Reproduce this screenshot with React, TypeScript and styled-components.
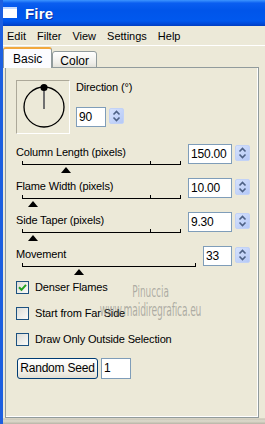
import React from "react";
import styled, { createGlobalStyle } from "styled-components";

const GlobalStyle = createGlobalStyle`
	html, body {
		margin: 0;
		padding: 0;
		background: #ece9d8;
	}
	body {
		font-family: "Liberation Sans", Arial, sans-serif;
		font-size: 11px;
		color: #000;
	}
`;

const Window = styled.div`
	width: 265px;
	height: 424px;
	box-sizing: border-box;
	display: flex;
	flex-direction: column;
	background: #ece9d8;
	border-left: 3px solid #1d5fe0;
	position: relative;
	overflow: hidden;
`;

const TitleBar = styled.div`
	height: 26px;
	margin-left: -3px;
	display: flex;
	align-items: center;
	gap: 8px;
	padding-left: 3px;
	background: linear-gradient(#3d95ff 0%, #0a5ef0 12%, #0055ea 40%, #0058ee 80%, #0049d8 92%, #003dc0 100%);
	flex-shrink: 0;
`;

const TitleIcon = styled.div`
	width: 14px;
	height: 11px;
	background: #fff;
	border-top: 2px solid #c7dcff;
	box-sizing: border-box;
	margin-top: -1px;
`;

const TitleText = styled.span`
	color: #fff;
	font-weight: bold;
	font-size: 15px;
	letter-spacing: 0.2px;
	text-shadow: 1px 1px 0 #0a2ea0;
`;

const MenuBar = styled.div`
	height: 19px;
	border-bottom: 1px solid #fff;
	display: flex;
	align-items: center;
	gap: 11px;
	padding-left: 4px;
	flex-shrink: 0;
`;

const MenuItem = styled.span`
	font-size: 11px;
`;

const TabRow = styled.div`
	display: flex;
	align-items: flex-end;
	margin-top: 1px;
	height: 21px;
	margin-bottom: -1px;
	position: relative;
	z-index: 1;
	flex-shrink: 0;
`;

const Tab = styled.div<{ $active?: boolean }>`
	box-sizing: border-box;
	height: ${(p) => (p.$active ? 21 : 17)}px;
	padding: ${(p) => (p.$active ? "3px 9px 0 9px" : "2px 7px 0 7px")};
	border: 1px solid #919b9c;
	border-bottom: ${(p) => (p.$active ? "none" : "1px solid #919b9c")};
	border-top: ${(p) => (p.$active ? "2px solid #f2a83c" : "1px solid #919b9c")};
	border-radius: 3px 3px 0 0;
	background: ${(p) => (p.$active ? "#fcfcfe" : "linear-gradient(#fff, #f0efea 70%, #e3e2da)")};
	font-size: 12px;
	line-height: 14px;
`;

const Panel = styled.div`
	box-sizing: border-box;
	margin-left: 2px;
	width: 254px;
	height: 351px;
	border: 1px solid #919b9c;
	box-shadow: inset -1px -1px 0 #fff;
	background: #ece9d8;
	padding: 12px 8px 0 10px;
	display: flex;
	flex-direction: column;
	position: relative;
	flex-shrink: 0;
`;

const BottomStrip = styled.div`
	flex: 1;
	border-top: 1px solid #d6d2c2;
	background: linear-gradient(#c9c6b8, #dedbcd 40%, #b8b4a6);
`;

const DirectionRow = styled.div`
	display: flex;
	gap: 6px;
	height: 54px;
	margin-bottom: 10px;
`;

const DialBox = styled.div`
	box-sizing: border-box;
	width: 54px;
	height: 54px;
	border: 1px solid;
	border-color: #aca899 #fff #fff #aca899;
	display: flex;
	align-items: center;
	justify-content: center;
`;

const DirCol = styled.div`
	display: flex;
	flex-direction: column;
`;

const Label = styled.div<{ $top?: number }>`
	font-size: 11px;
	line-height: 13px;
	letter-spacing: -0.15px;
	white-space: nowrap;
	margin-top: ${(p) => p.$top ?? 0}px;
`;

const FieldRow = styled.div<{ $top?: number }>`
	display: flex;
	align-items: flex-start;
	margin-top: ${(p) => p.$top ?? 0}px;
`;

const NumInput = styled.div<{ $w: number; $h?: number }>`
	box-sizing: border-box;
	width: ${(p) => p.$w}px;
	height: ${(p) => p.$h ?? 20}px;
	border: 1px solid #7f9db9;
	background: #fff;
	font-size: 12px;
	line-height: ${(p) => (p.$h ?? 20) - 2}px;
	padding-left: 2px;
	letter-spacing: -0.2px;
`;

const Spin = styled.div`
	box-sizing: border-box;
	width: 15px;
	height: 16px;
	margin-left: 3px;
	margin-top: 1px;
	border-radius: 2px;
	border: 1px solid #c2d2f6;
	background: linear-gradient(135deg, #d6e2fc, #b4c8f6);
	display: flex;
	align-items: center;
	justify-content: center;
`;

const Group = styled.div`
	display: flex;
	align-items: flex-start;
	height: 34px;
`;

const GroupLeft = styled.div`
	flex: 1;
	display: flex;
	flex-direction: column;
	padding-top: 2px;
`;

const GroupRight = styled.div`
	display: flex;
`;

const Track = styled.div`
	position: relative;
	height: 1px;
	background: #000;
	margin: 5px 7px 0 6px;
`;

const Tick = styled.div`
	position: absolute;
	bottom: 0;
	width: 1px;
	height: 4px;
	background: #000;
`;

const Thumb = styled.div`
	position: absolute;
	top: 3px;
	width: 0;
	height: 0;
	margin-left: -5px;
	border-left: 5px solid transparent;
	border-right: 5px solid transparent;
	border-bottom: 6px solid #000;
`;

const CheckList = styled.div`
	display: flex;
	flex-direction: column;
	gap: 13px;
	margin-top: 1px;
`;

const CheckRow = styled.div`
	display: flex;
	align-items: center;
	gap: 6px;
	height: 13px;
`;

const Box = styled.div`
	box-sizing: border-box;
	width: 13px;
	height: 13px;
	border: 1px solid #1c5180;
	background: linear-gradient(135deg, #dcdcd7, #fbfbf9);
	display: flex;
	align-items: center;
	justify-content: center;
`;

const ButtonRow = styled.div`
	display: flex;
	gap: 3px;
	margin-top: 12px;
	margin-left: 1px;
`;

const Button = styled.div`
	box-sizing: border-box;
	width: 81px;
	height: 21px;
	border: 1px solid #003c74;
	border-radius: 3px;
	background: linear-gradient(#ffffff, #f3f2ec 60%, #e2ded2);
	font-size: 12px;
	line-height: 19px;
	text-align: center;
	letter-spacing: -0.2px;
`;

const Watermark = styled.div`
	position: absolute;
	left: 72px;
	top: 214px;
	width: 146px;
	display: flex;
	flex-direction: column;
	align-items: center;
	color: rgba(110, 110, 110, 0.5);
	font-family: "DejaVu Sans Condensed", "DejaVu Sans", sans-serif;
	pointer-events: none;
	line-height: 19px;
`;

const WmName = styled.span`
	font-size: 16px;
	transform: scaleX(0.62);
`;

const WmSite = styled.span`
	font-size: 17px;
	letter-spacing: -0.3px;
	transform: scaleX(0.6);
	white-space: nowrap;
`;

function SpinButton() {
	return (
		<Spin>
			<svg width="9" height="12" viewBox="0 0 9 12">
				<path d="M1.5 4.5 L4.5 1.5 L7.5 4.5" fill="none" stroke="#4d6185" strokeWidth="1.6" />
				<path d="M1.5 7.5 L4.5 10.5 L7.5 7.5" fill="none" stroke="#4d6185" strokeWidth="1.6" />
			</svg>
		</Spin>
	);
}

function Slider({ pos, ticks }: { pos: number; ticks: number[] }) {
	return (
		<Track>
			{ticks.map((t) => (
				<Tick key={t} style={{ left: `calc(${t}% - ${t === 100 ? 1 : 0}px)` }} />
			))}
			<Thumb style={{ left: `${pos}%` }} />
		</Track>
	);
}

const params = [
	{ label: "Column Length (pixels)", value: "150.00", w: 44, pos: 27.5, ticks: [0, 80.6, 100] },
	{ label: "Flame Width (pixels)", value: "10.00", w: 44, pos: 7, ticks: [0, 80.6, 100] },
	{ label: "Side Taper (pixels)", value: "9.30", w: 44, pos: 7, ticks: [0, 80.6, 100] },
	{ label: "Movement", value: "33", w: 29, pos: 33, ticks: [0, 100] },
];

const checks = [
	{ label: "Denser Flames", on: true },
	{ label: "Start from Far Side", on: false },
	{ label: "Draw Only Outside Selection", on: false },
];

export default function App() {
	return (
		<>
			<GlobalStyle />
			<Window>
				<TitleBar>
					<TitleIcon />
					<TitleText>Fire</TitleText>
				</TitleBar>
				<MenuBar>
					{["Edit", "Filter", "View", "Settings", "Help"].map((m) => (
						<MenuItem key={m}>{m}</MenuItem>
					))}
				</MenuBar>
				<TabRow>
					<Tab $active>Basic</Tab>
					<Tab>Color</Tab>
				</TabRow>
				<Panel>
					<DirectionRow>
						<DialBox>
							<svg width="52" height="52" viewBox="0 0 52 52">
								<circle cx="27" cy="26" r="20" fill="none" stroke="#000" strokeWidth="1.3" />
								<line x1="27" y1="7" x2="27" y2="28" stroke="#707070" strokeWidth="2" />
								<circle cx="27" cy="6.5" r="3.6" fill="#000" />
							</svg>
						</DialBox>
						<DirCol>
							<Label $top={1}>Direction (°)</Label>
							<FieldRow $top={13}>
								<NumInput $w={30}>90</NumInput>
								<SpinButton />
							</FieldRow>
						</DirCol>
					</DirectionRow>
					{params.map((p) => (
						<Group key={p.label}>
							<GroupLeft>
								<Label>{p.label}</Label>
								<Slider pos={p.pos} ticks={p.ticks} />
							</GroupLeft>
							<GroupRight>
								<NumInput $w={p.w}>{p.value}</NumInput>
								<SpinButton />
							</GroupRight>
						</Group>
					))}
					<CheckList>
						{checks.map((c) => (
							<CheckRow key={c.label}>
								<Box>
									{c.on && (
										<svg width="9" height="9" viewBox="0 0 9 9">
											<path d="M1 4.2 L3.5 6.8 L8 1.8" fill="none" stroke="#21a121" strokeWidth="2" />
										</svg>
									)}
								</Box>
								<Label>{c.label}</Label>
							</CheckRow>
						))}
					</CheckList>
					<ButtonRow>
						<Button>Random Seed</Button>
						<NumInput $w={30} $h={21}>1</NumInput>
					</ButtonRow>
					<Watermark>
						<WmName>Pinuccia</WmName>
						<WmSite>www.maidiregrafica.eu</WmSite>
					</Watermark>
				</Panel>
				<BottomStrip />
			</Window>
		</>
	);
}
